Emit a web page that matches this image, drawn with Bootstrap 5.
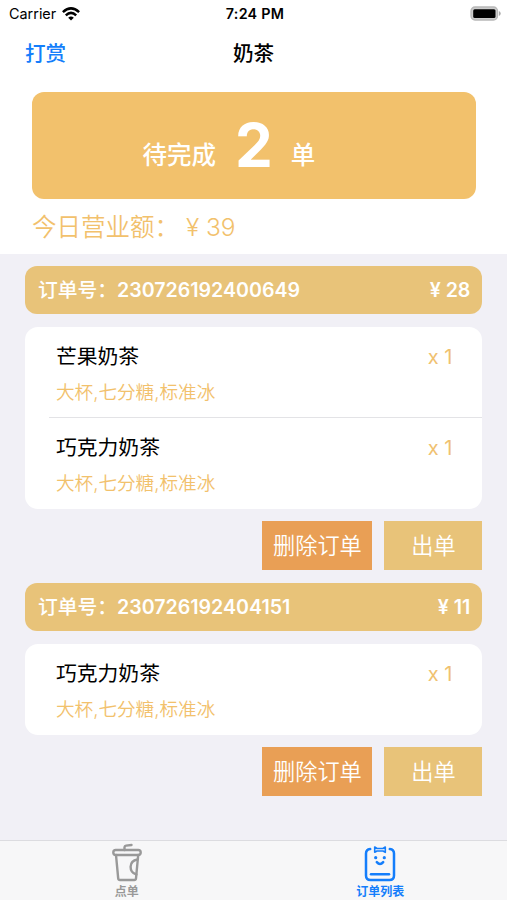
<!DOCTYPE html>
<html lang="zh-CN">
<head>
<meta charset="utf-8">
<meta name="viewport" content="width=device-width, initial-scale=1">
<title>奶茶</title>
<link href="https://cdn.jsdelivr.net/npm/bootstrap@5.3.0/dist/css/bootstrap.min.css" rel="stylesheet">
<style>
body{font-family:Inter,"Noto Sans CJK SC",sans-serif;background:#f1f0f6;color:#000;height:900px;overflow:hidden;line-height:1.2}
.top-area{height:254px}
.status-bar{height:28px;padding:0 6px 0 9px;font-size:14.4px}
.status-bar>div{flex:1 1 0}
.wifi{margin-left:6px}
.status-time{font-weight:600;letter-spacing:.25px;font-size:14.3px}
.title-bar{height:48px;padding:4px 25px 0;font-size:20.6px;font-weight:500}
.title-bar>*{flex:1 1 0}
.tip-link{color:#147efb}
.hero{margin:15.5px 31px 0 31.5px;height:107.5px;border-radius:12px;background:#f2c16c;padding:12px 0 0 111px;font-size:24.5px;font-weight:500;color:#fff}
.hero-text{line-height:60px}
.hero-text span{vertical-align:3px}
.hero-text .hero-num{font-size:60px;font-weight:700;line-height:60px;margin:0 18px 0 19px;vertical-align:baseline}
.turnover{margin:14px 0 0 32px;font-size:24.5px;font-weight:350;color:#f2c16c}
.orders{padding:12px 24.6px 0 25.4px}
.order-head{height:48px;border-radius:12px;background:#e8c379;color:#fff;font-weight:500;font-size:19.8px;padding:2px 12px 0 12.5px;margin-bottom:13px}
.order-head .num{font-weight:600;font-size:19.6px}
.items{border-radius:13px;background:#fff}
.item{height:91px;padding:15.5px 30px 0 30.6px}
.item:not(:last-child){height:90px}
.item+.item{height:92px;padding-top:16.5px;background:linear-gradient(#e3e3e6,#e3e3e6) 24px 0/100% 1px no-repeat}
.item-name{font-size:20.8px;line-height:28px}
.item-note{font-size:18.6px;line-height:26px;margin-top:8px;font-weight:350;color:#f2c16c}
.qty{font-size:20px;line-height:28px;color:#f0c170}
.actions{margin:12px 0 13px;gap:12px}
.act{height:49px;border:0;border-radius:0;padding:0;color:#fff;font-size:22.2px;line-height:49px;width:98px;background:#e8c379;font-weight:350}
.act.remove{width:110px;background:#e99f55}
.tabs{height:60px;background:#f7f7f8;border-top:1px solid #dcdce0;font-size:12px;font-weight:700}
.tabs>a{flex:1 1 0;color:#999;line-height:16px;padding-top:2px}
.tabs>a>span{padding-top:1px}
.tabs>a.current{color:#147efb}
</style>
</head>
<body class="d-flex flex-column">
<header class="top-area bg-white flex-shrink-0">
  <div class="status-bar d-flex align-items-center">
    <div class="d-flex align-items-center"><span>Carrier</span>
      <svg class="wifi" width="18" height="14" viewBox="0 0 18 14" fill="none" stroke="#000" stroke-width="2.5"><path d="M.9 5.1Q9-2.3 17.1 5.1"/><path d="M3.8 8.3Q9 3.5 14.2 8.3"/><path d="M9 13.5 6.2 10.7Q9 8.3 11.8 10.7Z" fill="#000" stroke="none"/></svg>
    </div>
    <div class="status-time text-center">7:24 PM</div>
    <div class="d-flex justify-content-end">
      <svg width="31" height="16" viewBox="0 0 31 16"><rect x="1" y="1" width="26.5" height="13" rx="4" fill="#ccc" stroke="#b8b8b8" stroke-width="1.3"/><rect x="3.2" y="3.2" width="22.3" height="8.8" rx="1.5" fill="#000"/><path d="M28.9 5q1.8.8 1.8 2.5t-1.8 2.5z" fill="#aaa"/></svg>
    </div>
  </div>
  <nav class="title-bar d-flex align-items-center">
    <a class="tip-link text-decoration-none" href="#">打赏</a>
    <div class="text-center">奶茶</div>
    <span></span>
  </nav>
  <div class="hero d-flex align-items-center"><div class="hero-text"><span>待完成</span><span class="hero-num">2</span><span>单</span></div></div>
  <div class="turnover">今日营业额： ¥ 39</div>
</header>
<main class="orders flex-grow-1">
  <section>
    <div class="order-head d-flex align-items-center justify-content-between"><div>订单号：<span class="num">230726192400649</span></div><span class="num">¥ 28</span></div>
    <div class="items">
      <div class="item d-flex justify-content-between"><div><div class="item-name">芒果奶茶</div><div class="item-note">大杯,七分糖,标准冰</div></div><div class="qty">x 1</div></div>
      <div class="item d-flex justify-content-between"><div><div class="item-name">巧克力奶茶</div><div class="item-note">大杯,七分糖,标准冰</div></div><div class="qty">x 1</div></div>
    </div>
    <div class="actions d-flex justify-content-end"><button class="btn act remove">删除订单</button><button class="btn act">出单</button></div>
  </section>
  <section>
    <div class="order-head d-flex align-items-center justify-content-between"><div>订单号：<span class="num">230726192404151</span></div><span class="num">¥ 11</span></div>
    <div class="items">
      <div class="item d-flex justify-content-between"><div><div class="item-name">巧克力奶茶</div><div class="item-note">大杯,七分糖,标准冰</div></div><div class="qty">x 1</div></div>
    </div>
    <div class="actions d-flex justify-content-end"><button class="btn act remove">删除订单</button><button class="btn act">出单</button></div>
  </section>
</main>
<nav class="tabs d-flex flex-shrink-0">
  <a class="d-flex flex-column align-items-center text-decoration-none" href="#">
    <svg width="32" height="40" viewBox="0 0 32 40" fill="none" stroke="currentColor" stroke-width="2.4" stroke-linecap="round" stroke-linejoin="round"><path d="M13.5 7V4.2Q13.7 2.8 15 2.6L20.5 2"/><rect x="2.3" y="7" width="27.4" height="5" rx="2.5"/><path d="M5 12 7.2 35.3Q7.4 37 9 37H23.2Q24.8 37 25 35.3L27.2 12"/><path d="M26.4 16.5C17.5 18 17.5 29.5 25.4 31.5"/></svg>
    <span>点单</span>
  </a>
  <a class="current d-flex flex-column align-items-center text-decoration-none" href="#">
    <svg width="32" height="40" viewBox="0 0 32 40" fill="none" stroke="currentColor" stroke-width="2.5" stroke-linecap="round" stroke-linejoin="round"><path d="M6.2 6Q2 6.4 2 10.5V32.5Q2 37 6.5 37H25.5Q30 37 30 32.5V10.5Q30 6.4 25.8 6"/><path d="M10.7 4V9.3L13 8H19L21.3 9.3V4L19 5.5H13Z" stroke-width="1.6"/><path d="M7 31.2H25"/><path d="M12.8 19.2Q16 22.8 19.2 19.2"/><g fill="currentColor" stroke="none"><circle cx="11.7" cy="14.7" r="1.6"/><circle cx="20.3" cy="14.7" r="1.6"/></g></svg>
    <span>订单列表</span>
  </a>
</nav>
<script src="https://cdn.jsdelivr.net/npm/bootstrap@5.3.0/dist/js/bootstrap.bundle.min.js"></script>
</body>
</html>
